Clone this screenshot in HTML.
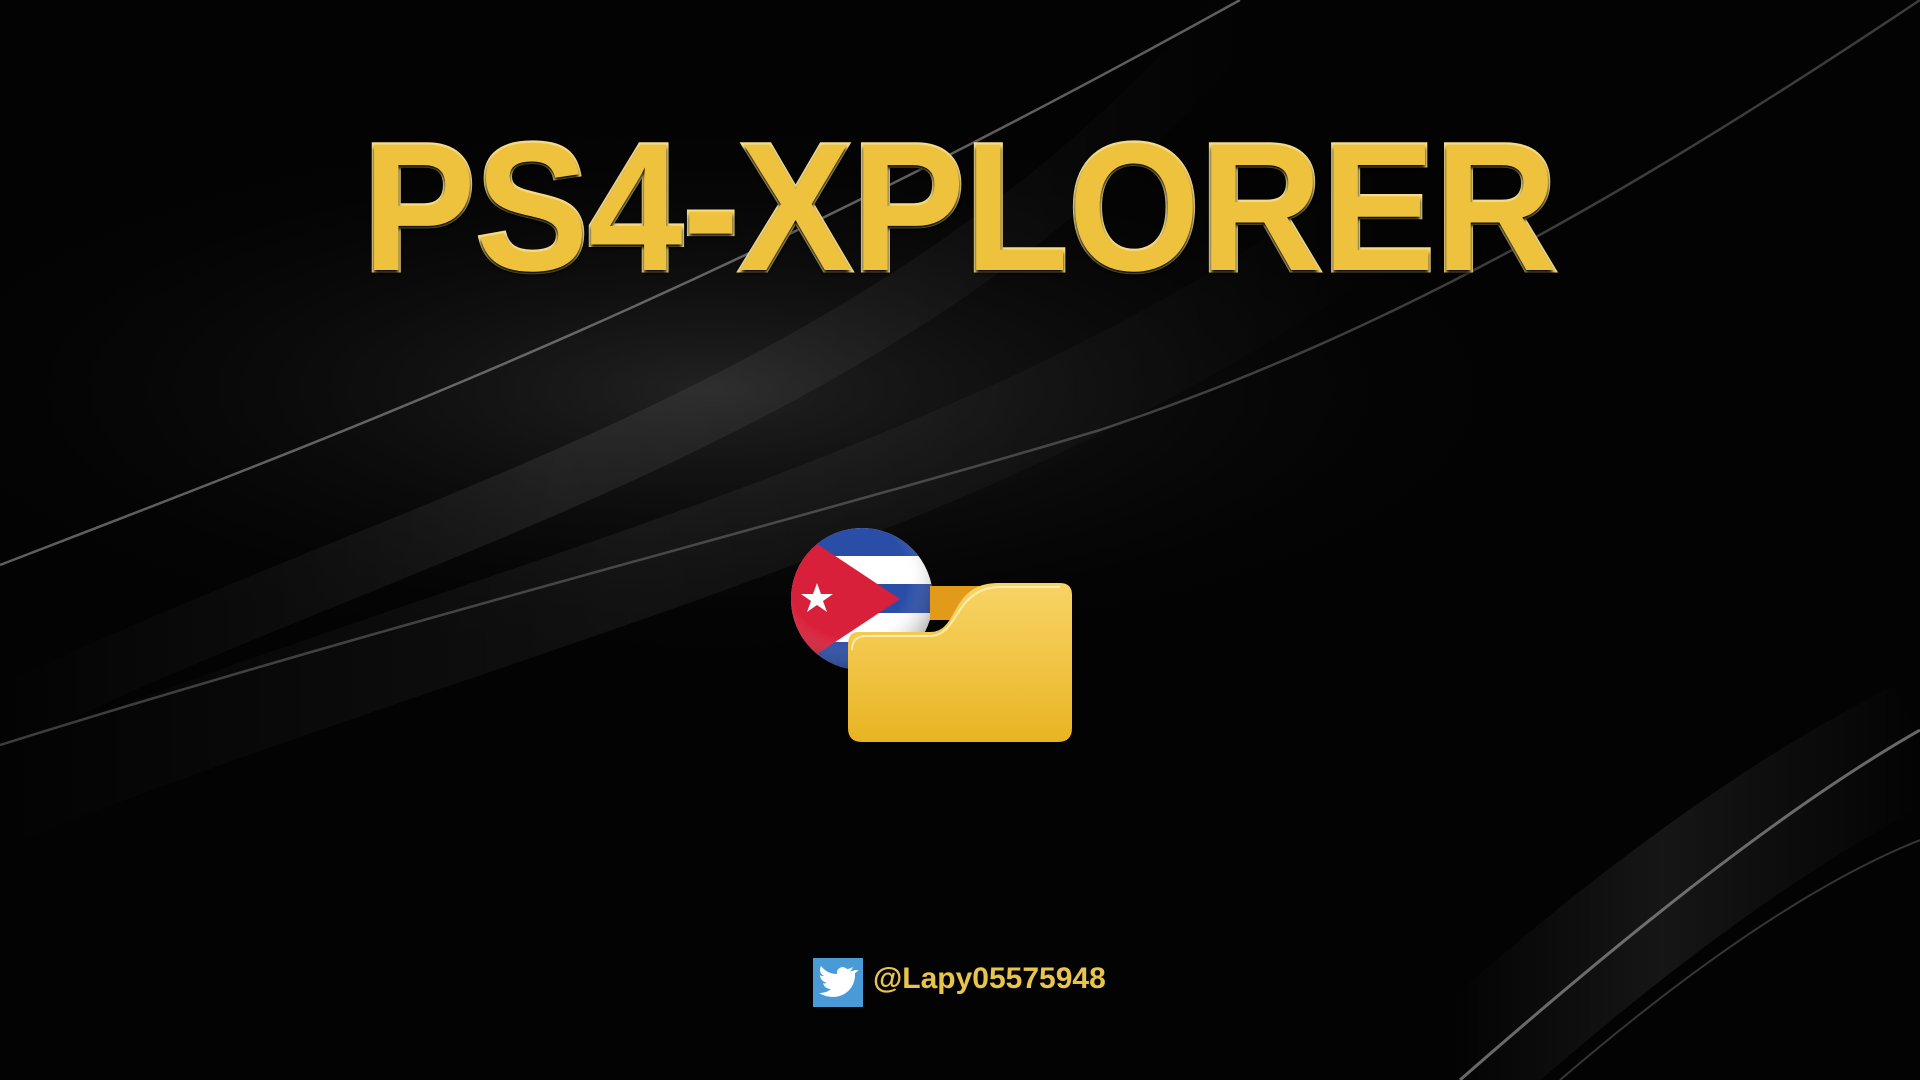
<!DOCTYPE html>
<html><head><meta charset="utf-8"><style>
html,body{margin:0;padding:0;background:#000;}
#s{position:relative;width:1920px;height:1080px;overflow:hidden;background:#030303;}
svg{position:absolute;left:0;top:0;}
.t{position:absolute;left:0;width:1920px;top:112px;text-align:center;font-family:"Liberation Sans",sans-serif;font-weight:bold;font-size:182px;letter-spacing:0;color:#efc23e;-webkit-text-stroke:5px #f6dc86;paint-order:stroke fill;line-height:190px;transform:scaleX(0.93);transform-origin:960px 0;text-shadow:0 3px 4px #000;}
.h{position:absolute;left:873px;top:962px;font-family:"Liberation Sans",sans-serif;font-weight:bold;font-size:30px;color:#e9c44c;letter-spacing:0;}
</style></head><body><div id="s">
<svg width="1920" height="1080" viewBox="0 0 1920 1080">
<defs>
<linearGradient id="b1" x1="0" y1="0" x2="1" y2="0">
<stop offset="0" stop-color="#fff" stop-opacity="0"/><stop offset="0.45" stop-color="#fff" stop-opacity="0.3"/><stop offset="1" stop-color="#fff" stop-opacity="0"/></linearGradient>
<radialGradient id="gl" cx="0.45" cy="0.45" r="0.5"><stop offset="0" stop-color="#222"/><stop offset="1" stop-color="#000" stop-opacity="0"/></radialGradient>
<linearGradient id="fo" x1="0" y1="0" x2="0" y2="1"><stop offset="0" stop-color="#f8d466"/><stop offset="1" stop-color="#e9b423"/></linearGradient>
<radialGradient id="fg" cx="0.4" cy="0.35" r="0.7"><stop offset="0.6" stop-color="#fff" stop-opacity="0"/><stop offset="1" stop-color="#000" stop-opacity="0.35"/></radialGradient>
<clipPath id="cc"><circle cx="862" cy="599" r="71"/></clipPath>
</defs>
<ellipse cx="800" cy="420" rx="900" ry="300" fill="url(#gl)"/>
<g fill="none" stroke="url(#b1)">
<path d="M0 720 C400 520 900 420 1250 0" stroke-width="60" opacity="0.25"/>
<path d="M0 800 C500 600 1000 500 1400 200" stroke-width="90" opacity="0.18"/>
<path d="M1450 1080 C1650 900 1800 800 1920 740" stroke-width="120" opacity="0.25"/>
</g>
<g fill="none" stroke="#aaa">
<path d="M0 565 C350 430 700 300 1240 0" stroke-width="2.5" opacity="0.55"/>
<path d="M0 745 C400 620 800 520 1100 430 C1400 330 1650 180 1920 0" stroke-width="2.5" opacity="0.35"/>
<path d="M1460 1080 C1620 940 1780 810 1920 730" stroke-width="3" opacity="0.6"/>
<path d="M1560 1080 C1700 960 1820 880 1920 840" stroke-width="2" opacity="0.3"/>
</g>
<g clip-path="url(#cc)">
<rect x="790" y="526" width="150" height="150" fill="#fff"/>
<rect x="790" y="526" width="150" height="30" fill="#2a4da8"/>
<rect x="790" y="584" width="150" height="29" fill="#2a4da8"/>
<rect x="790" y="642" width="150" height="34" fill="#2a4da8"/>
<path d="M790 526 L900 599 L790 672 Z" fill="#d9203a"/>
<circle cx="862" cy="599" r="71" fill="url(#fg)"/>
</g>
<polygon points="817,583 821,594 833,594 823,601 827,612 817,605 807,612 811,601 801,594 813,594" fill="#fff"/>
<path d="M930 586 L1040 586 L1040 620 L930 620 Z" fill="#e19a1a"/>
<path d="M858 632 L930 632 C950 632 952 610 965 596 C975 586 985 583 1000 583 L1060 583 Q1072 583 1072 595 L1072 728 Q1072 742 1058 742 L862 742 Q848 742 848 728 L848 645 Q848 632 858 632 Z" fill="url(#fo)"/>
<path d="M852 650 Q852 636 866 636 L930 636 C950 636 955 612 968 600 C978 590 988 587 1002 587 L1060 587" fill="none" stroke="#fff3c0" stroke-width="2" opacity="0.8"/>
<rect x="813" y="958" width="50" height="49" fill="#4a9ad8"/>
<path d="M855 970 c-2 1 -4 1 -6 2 c2 -1 3 -3 4 -5 c-2 1 -4 2 -6 2 c-4 -4 -11 -1 -10 5 c-7 0 -12 -3 -16 -8 c-2 4 -1 8 3 10 c-2 0 -3 0 -4 -1 c0 4 3 7 7 8 c-1 0 -3 1 -4 0 c1 4 4 6 8 6 c-3 3 -8 4 -12 4 c17 10 37 0 36 -20 c2 -1 3 -3 4 -3z" fill="#fff"/>
</svg>
<div class="t">PS4-XPLORER</div>
<div class="h">@Lapy05575948</div>
</div></body></html>
